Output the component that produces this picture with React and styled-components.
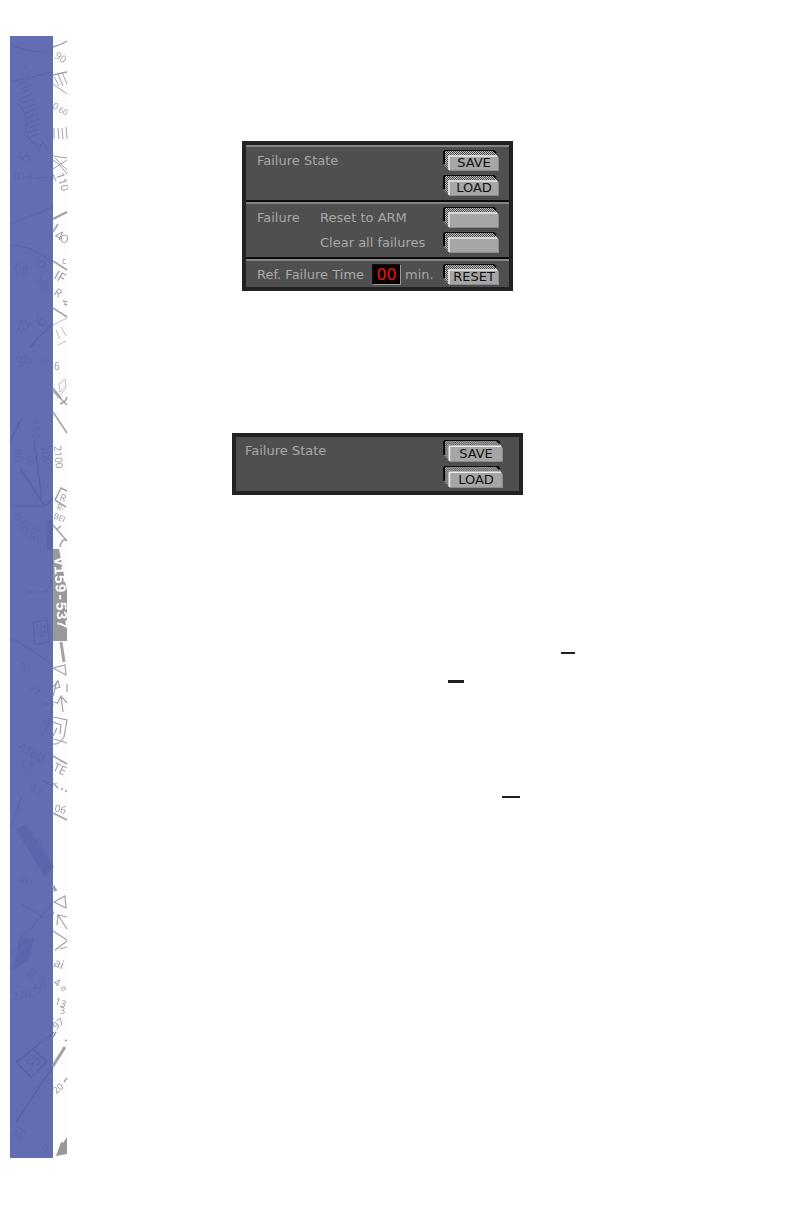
import React from 'react';
import styled, { createGlobalStyle } from 'styled-components';

const GlobalStyle = createGlobalStyle`
  * {
    box-sizing: border-box;
  }
  body {
    margin: 0;
    background: #fff;
    font-family: 'DejaVu Sans', sans-serif;
  }
`;

// faint chart lettering that shows through the blue band
const bandLabels = [
  { x: 14, y: 180, text: '014', turn: 0, size: 11 },
  { x: 27, y: 164, text: '5', turn: -60, size: 16 },
  { x: 14, y: 272, text: '08', turn: 10, size: 12 },
  { x: 32, y: 262, text: 'RO', turn: 30, size: 10 },
  { x: 36, y: 284, text: 'NE', turn: 30, size: 10 },
  { x: 26, y: 336, text: '52', turn: -70, size: 14 },
  { x: 42, y: 328, text: '6', turn: -50, size: 16 },
  { x: 18, y: 368, text: '36', turn: -20, size: 14 },
  { x: 40, y: 360, text: 'N', turn: 50, size: 9 },
  { x: 30, y: 420, text: '110', turn: 82, size: 11 },
  { x: 41, y: 446, text: '200', turn: 80, size: 11 },
  { x: 24, y: 456, text: '16', turn: 70, size: 10 },
  { x: 14, y: 450, text: '90', turn: 80, size: 11 },
  { x: 14, y: 518, text: 'DUBLIN', turn: 32, size: 8 },
  { x: 20, y: 530, text: 'O-500', turn: 38, size: 9 },
  { x: 37, y: 625, text: '59', turn: 85, size: 11 },
  { x: 18, y: 668, text: '00', turn: 30, size: 10 },
  { x: 28, y: 688, text: '21', turn: 50, size: 11 },
  { x: 18, y: 748, text: 'ATBU', turn: 32, size: 11 },
  { x: 20, y: 768, text: 'CT', turn: 15, size: 11 },
  { x: 28, y: 788, text: '-51', turn: 30, size: 10 },
  { x: 34, y: 842, text: '060', turn: 52, size: 9 },
  { x: 18, y: 880, text: '051', turn: 30, size: 9 },
  { x: 20, y: 964, text: '37', turn: -35, size: 12 },
  { x: 30, y: 980, text: '80', turn: -50, size: 10 },
  { x: 13, y: 1000, text: '226', turn: -8, size: 11 },
  { x: 37, y: 994, text: '50', turn: -35, size: 12 },
  { x: 30, y: 1070, text: '55', turn: -35, size: 13 },
  { x: 19, y: 1140, text: '51', turn: -45, size: 11 },
  { x: 45, y: 1153, text: '0', turn: -35, size: 10 },
];

// lettering in the white margin
const edgeLabels = [
  { x: 54, y: 57, text: '90', turn: 35, size: 10 },
  { x: 52, y: 108, text: '0', turn: 25, size: 9 },
  { x: 58, y: 112, text: '60', turn: 22, size: 8 },
  { x: 56, y: 174, text: '110', turn: 72, size: 11 },
  { x: 54, y: 238, text: '4', turn: 25, size: 13 },
  { x: 59, y: 241, text: 'O', turn: 20, size: 11 },
  { x: 62, y: 264, text: 'c', turn: 0, size: 9 },
  { x: 53, y: 278, text: 'IF', turn: 30, size: 13 },
  { x: 53, y: 294, text: 'R', turn: 35, size: 11 },
  { x: 54, y: 370, text: '6', turn: 0, size: 10 },
  { x: 54, y: 446, text: '2100', turn: 85, size: 10 },
  { x: 59, y: 500, text: 'R', turn: 20, size: 10 },
  { x: 56, y: 509, text: 'R-', turn: 22, size: 8 },
  { x: 53, y: 518, text: 'BEI', turn: 22, size: 8 },
  { x: 52, y: 770, text: 'TE', turn: 25, size: 12 },
  { x: 54, y: 811, text: '06', turn: 15, size: 10 },
  { x: 53, y: 966, text: 'ai', turn: 20, size: 12 },
  { x: 53, y: 984, text: '4', turn: 30, size: 10 },
  { x: 60, y: 990, text: '@', turn: 10, size: 7 },
  { x: 54, y: 1004, text: '13', turn: 20, size: 10 },
  { x: 60, y: 1014, text: '3', turn: 0, size: 9 },
  { x: 56, y: 1030, text: '97', turn: -38, size: 10 },
  { x: 56, y: 1094, text: '20', turn: -38, size: 9 },
];

const ChartLabels = ({ items }) =>
  items.map(({ x, y, text, turn, size }) => (
    <text key={`${x}-${y}`} transform={`translate(${x} ${y}) rotate(${turn})`} fontSize={size}>
      {text}
    </text>
  ));

const ChartStrip = () => (
  <Strip>
    <svg viewBox="10 36 58 1122" preserveAspectRatio="xMinYMin slice" aria-hidden="true">
      <rect x="10" y="36" width="43" height="1122" fill="#626db3" />
      <g stroke="#525ca5" strokeWidth="1" fill="none" opacity="0.6">
        <path d="M10 44q20 10 43 8M10 82l43-10M23 64l6 7M10 224l43-17M10 245l20 3 23 14M13 268l9-7" />
        <path d="M22 98l10-4M23 103l11-4M24 108l12-4M26 113l11-4M27 118l11-4M28 123l11-4M29 128l10-4M28 133l11-4M28 138l10-4M20 84l10-5M21 89l10-4M21 93l10-4" />
        <path d="M16 103q12 8 10 22t12 20M38 152l5-10 5 8M36 178h18" />
        <path d="M34 440l8 60M20 468l24 37M10 442l12-25M10 506h36l7-9M30 346l23-22M30 348l8-10" strokeWidth="1.5" />
        <path d="M33 622l14-2 2 22-14 3zM10 638q24 12 43 28M28 592h18l7-12M44 704h9l-6 24-6 8M10 830l12-34M42 780l11 6" />
        <path d="M22 904l22 14 10-5M20 938l12-10 21-26M10 955l18-16" />
        <path d="M16 1062l38-30M17 1063l16-14 14 13-16 15zM16 1122l37-56" strokeWidth="1.5" />
      </g>
      <g fill="#525ca5" opacity="0.45">
        <path d="M16 830l9-6 29 43-9 10zM20 938h14l-5 22-16 10zM47 520h6v30h-6z" />
        <ChartLabels items={bandLabels} />
      </g>
      <g stroke="#a3a3a3" strokeWidth="1" fill="none">
        <path d="M53 47q8-2 14-6M53 75l14-3" strokeWidth="1.5" />
        <path d="M53 84l14 10M54 77l5 9M58 74l5 12M62 72l5 12M54 128v11M58 128l1 11M62 128l1 11M66 127l1 12" />
        <path d="M53 156l14 2M53 169l14-9M53 160q6 3 14 14M53 174l3 7M55 158l12 12" />
        <path d="M53 219l14-7" strokeWidth="2.5" />
        <path d="M53 232l5-8M53 261l14 9M53 308l14 9M63 301l4 1M64 304l3 1" strokeWidth="1.5" />
        <path d="M53 325l14-7M56 330l4 9M61 327l5 9M58 345l8-4M59 384l6-5 1 8-6 5zM57 398l8-8" stroke="#bdbdbd" />
        <path d="M53 388l8 10M53 391l14 14M53 412l14 21M60 404q6-2 7-7" strokeWidth="1.5" />
        <path d="M55 500l6-12 6 3M55 500l11 7M53 525l14 16M56 530l5-4M60 547q2-10 7-6" strokeWidth="1.5" />
        <path d="M61 642l3 20" strokeWidth="3" />
        <path d="M53 668l13 7-1-10zM53 696l4-15M53 687l5-6 2 7M54 689l6-2M63 712l-2-16M57 704l4-8 6 7M67 684v8M53 702l5 1" strokeWidth="1.2" />
        <path d="M53 717l14 3-3 17q-5 8-11 7M53 722l8 3-1 9M57 728l-4 8M54 739l13 4" strokeWidth="1.2" />
        <path d="M53 756l14 8M53 783l5 5M61 789h2M65 791h2M56 783v1M53 813l14 7" strokeWidth="1.5" />
        <path d="M53 886l3 5" strokeWidth="3" />
        <path d="M54 902l11-6 1 12zM53 912l1 1M67 929l-9-14M57 925l1-10 9 2M53 931l14 9M55 950l12-9M60 949l7-2" strokeWidth="1.2" />
        <path d="M53 1066l12-19" strokeWidth="3" />
        <path d="M65 1041l2-1M64 1082l3-4M53 1037l3-5" strokeWidth="1.5" />
      </g>
      <g fill="#999">
        <path d="M53 549h6l8 42v50H53zM56 1156l5-14 6 2V1154zM63 1143l4-6v8z" />
        <ChartLabels items={edgeLabels} />
      </g>
      <text
        transform="translate(54 557) rotate(87)"
        fontSize="15"
        fontWeight="bold"
        fontFamily="Liberation Mono, monospace"
        fill="#fff"
      >
        V159-537
      </text>
    </svg>
  </Strip>
);

const Key = ({ children, large, ...rest }) => (
  <KeyButton $large={large} {...rest}>
    <svg viewBox="0 0 56 21" preserveAspectRatio="none" aria-hidden="true">
      <defs>
        <pattern id="dither" width="2" height="2" patternUnits="userSpaceOnUse">
          <rect width="2" height="2" fill="#4a4a4a" />
          <path d="M0 0h1v1H0zM1 1h1v1H1z" fill="#bdbdbd" />
        </pattern>
      </defs>
      <path d="M1 1H50L55 6V7H7V21L1 15z" fill="url(#dither)" />
      <path d="M0 14V1H1V0H50V1H2V14z" fill="#0c0c0c" />
      <path d="M50 0l3 3" stroke="#0c0c0c" strokeWidth="2" />
      <path d="M5 6H54L56 8V21H7L5 19z" fill="#a6a6a6" />
      <path d="M6 20V6H54" fill="none" stroke="#ececec" strokeWidth="1.5" />
      <path d="M7 20.5H55.5V8" fill="none" stroke="#8a8a8a" />
    </svg>
    <span>{children}</span>
  </KeyButton>
);

const App = () => {
  const [minutes, setMinutes] = React.useState('00');

  return (
    <Page>
      <GlobalStyle />
      <ChartStrip />
      <Content>
        <Panel>
          <Section>
            <Row>
              <Label>Failure State</Label>
              <Key>SAVE</Key>
            </Row>
            <Row>
              <Key>LOAD</Key>
            </Row>
          </Section>
          <Section>
            <Row>
              <Group>Failure</Group>
              <Label id="arm">Reset to ARM</Label>
              <Key aria-labelledby="arm" />
            </Row>
            <Row>
              <Group />
              <Label id="clear">Clear all failures</Label>
              <Key aria-labelledby="clear" />
            </Row>
          </Section>
          <Section>
            <Row>
              <Label as="label" htmlFor="minutes">Ref. Failure Time</Label>
              <Readout id="minutes" value={minutes} onChange={(e) => setMinutes(e.target.value)} />
              <Label>min.</Label>
              <Key onClick={() => setMinutes('00')}>RESET</Key>
            </Row>
          </Section>
        </Panel>

        <Panel $wide>
          <Section $plain>
            <Row>
              <Label>Failure State</Label>
              <Key large>SAVE</Key>
            </Row>
            <Row>
              <Key large>LOAD</Key>
            </Row>
          </Section>
        </Panel>

        <Rules>
          <Rule $indent={493} $width={14} $space={15} />
          <Rule $indent={380} $width={16} $space={26} $thick />
          <Rule $indent={434} $width={18} $space={113} />
        </Rules>
      </Content>
    </Page>
  );
};

const Page = styled.div`
  display: flex;
  min-height: 100vh;
  padding: 36px 0 66px 10px;
`;

const Strip = styled.aside`
  flex: 0 0 58px;
  position: relative;
  overflow: hidden;
  background: linear-gradient(to right, #626db3 43px, #fdfdfd 43px);

  svg {
    position: absolute;
    inset: 0;
    width: 100%;
    height: 100%;
    font-family: 'Open Sans', sans-serif;
  }
`;

const Content = styled.main`
  flex: 1;
  display: flex;
  flex-direction: column;
  align-items: center;
  padding-top: 105px;
`;

const Panel = styled.section`
  width: 100%;
  max-width: ${(props) => (props.$wide ? '291px' : '271px')};
  margin: 0 105px 142px 0;
  border: 4px solid #222;
  background: #4f4f4f;
`;

const Section = styled.div`
  display: flex;
  flex-direction: column;
  gap: 4px;
  padding: ${(props) => (props.$plain ? '3px 16px 3px 9px' : '3px 10px 4px 11px')};
  border-top: ${(props) => (props.$plain ? '0' : '2px solid #858585')};
  border-bottom: ${(props) => (props.$plain ? '0' : '2px solid #0c0c0c')};

  &:last-child {
    padding-bottom: ${(props) => (props.$plain ? '3px' : '2px')};
    border-bottom: 0;
  }
`;

const Row = styled.div`
  display: flex;
  align-items: center;
`;

const Label = styled.span`
  color: #a8a8a8;
  font-size: 13px;
  line-height: 16px;
  white-space: nowrap;
`;

const Group = styled(Label)`
  width: 63px;
`;

const Readout = styled.input`
  width: 29px;
  height: 21px;
  margin: 0 4px 0 8px;
  padding: 0;
  border: 1px solid #111;
  border-right-color: #999;
  border-bottom-color: #999;
  background: #0a0000;
  color: #e01818;
  font: 16px 'DejaVu Sans', sans-serif;
  text-align: center;
`;

const KeyButton = styled.button`
  position: relative;
  flex: none;
  width: ${(props) => (props.$large ? '60px' : '56px')};
  height: ${(props) => (props.$large ? '22px' : '21px')};
  margin-left: auto;
  padding: 5px 0 0 6px;
  border: 0;
  background: none;
  color: #111;
  font: 13px/16px 'DejaVu Sans', sans-serif;
  text-align: center;
  cursor: pointer;

  svg {
    position: absolute;
    inset: 0;
    width: 100%;
    height: 100%;
  }
  span {
    position: relative;
  }
`;

const Rules = styled.div`
  display: flex;
  flex-direction: column;
  align-self: stretch;
`;

const Rule = styled.hr`
  width: ${(props) => props.$width}px;
  height: ${(props) => (props.$thick ? 3 : 2)}px;
  margin: ${(props) => props.$space}px 0 0 ${(props) => props.$indent}px;
  border: 0;
  background: #231f20;
`;

export default App;
